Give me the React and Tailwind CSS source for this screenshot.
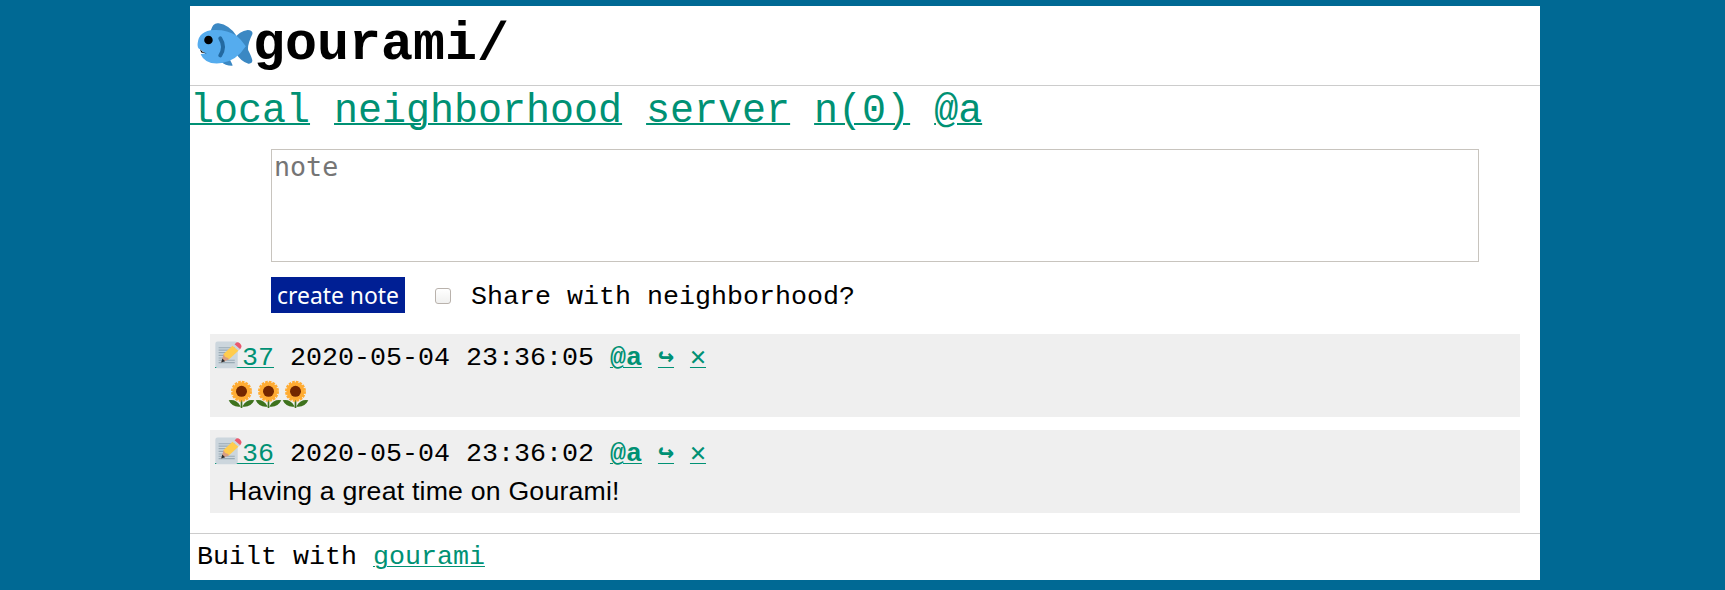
const Fish = () => (
  <svg className="mb-[3px] ml-px h-[48px] w-[56px] shrink-0" viewBox="50 60 171 144">
    <path fill="#3B88C3" d="M92 91Q99 66 116 69Q148 74 170 106L140 120ZM164 115Q179 93 205 89Q222 90 219 102Q204 132 206 150Q217 171 219 182Q219 193 207 192Q185 187 167 158ZM124 186Q137 199 159 198Q156 190 151 181Z" />
    <path fill="#55ACEE" d="M61 163L75 160L59 148Q50 145 52 130Q55 91 103 89Q143 88 170 106Q186 119 199 139Q171 183 126 190Q76 197 61 163Z" />
    <path fill="#000" d="M59 148Q66 158 80 161L63 158Z" />
    <circle cx="85" cy="120" r="13" fill="#000" />
    <path d="M121 115Q138 141 121 167" fill="none" stroke="#2369A0" strokeWidth="12" strokeLinecap="round" />
  </svg>
);

const Memo = () => (
  <svg className="h-[29px] w-[27px] shrink-0" viewBox="45 44 82 87">
    <rect x="46" y="48" width="68" height="81" rx="7" fill="#CCD6DD" />
    <path d="M56 67H105M56 74H105M56 82H100M56 90H93M56 98H86M56 105H105M56 112H105" stroke="#99AAB5" strokeWidth="3.5" />
    <path fill="#EA596E" d="M107 54Q113 47 121 54Q129 62 123 69L120 72L104 57Z" />
    <path fill="#CCD6DD" d="M99 61L104 56L121 71L116 76Z" />
    <path fill="#FFCC4D" d="M71 86L98 61L116 76L87 103L75 101Z" />
    <path fill="#D99E82" d="M71 86L76 95L85 98L87 103L64 112Z" />
    <path fill="#292F33" d="M67 100L76 108L64 112Z" />
  </svg>
);

const Sunflower = () => (
  <svg className="h-[29px] w-[27px] shrink-0" viewBox="84 163 81 87">
    <path fill="#3E721D" d="M122 220H127V247H122ZM121 241Q109 220 86 224Q97 246 121 243ZM128 241Q140 220 163 224Q152 246 128 243Z" />
    <circle cx="124.500" cy="197" r="27" fill="#FFAC33" />
    <circle cx="124.500" cy="197" r="28" fill="none" stroke="#FFAC33" strokeWidth="7" strokeDasharray="8 3" />
    <circle cx="124.500" cy="197" r="16.500" fill="#732700" />
  </svg>
);

const link = "text-[#009174] underline decoration-1 underline-offset-[2px]";
const NAV = ["local", "neighborhood", "server", "n(0)", "@a"];

function Note({ id, time, children }) {
  return (
    <article className="h-[83px] bg-[#efefef] px-[5px]">
      <div className="flex h-12 items-center gap-4 whitespace-pre leading-[48px]">
        <a className="mt-1.5 flex h-7 items-start self-start border-b border-[#009174] text-[#009174]">
          <Memo />
          <span className="leading-9">{id}</span>
        </a>
        <time>2020-05-04 {time}</time>
        <a className={`${link} font-bold`}>@a</a>
        <a className={`${link} w-4 font-bold`}>↪</a>
        <a className={`${link} w-4 font-bold`}>✕</a>
      </div>
      <div className="flex h-[26px] items-center pl-[13px] font-['Liberation_Sans',sans-serif] leading-[26px] tracking-[0.21px]">{children}</div>
    </article>
  );
}

export default function App() {
  return (
    <div className="h-[590px] bg-[#006994] pl-[190px] pr-[185px] pt-1.5 font-['Nimbus_Mono_PS','Courier_10_Pitch','Liberation_Mono',monospace] text-[26.667px] text-black">
      <main className="flex h-[574px] w-[1350px] flex-col bg-white">
        <header className="flex h-20 items-center border-b border-[#ccc] pl-1.5">
          <Fish />
          <h1 className="text-[53.333px] font-bold leading-[79px]">gourami/</h1>
        </header>
        <nav className="flex h-[50px] gap-6 pt-px text-[40px] leading-[50px]">
          {NAV.map((n) => (
            <a key={n} className="text-[#009174] underline decoration-2 underline-offset-[1px]">{n}</a>
          ))}
        </nav>
        <form className="ml-[81px] mt-[13px]">
          <textarea placeholder="note" className="block h-[113px] w-[1208px] resize-none border border-[#c8c4be] px-0.5 py-px font-['DejaVu_Sans_Mono',monospace] leading-[31px] placeholder:text-[#757575]" />
          <div className="mt-[15px] flex h-9 items-center">
            <button type="button" className="h-9 w-[134px] whitespace-nowrap bg-[#001f94] pt-px font-['Noto_Sans',sans-serif] text-[22.900px] leading-[35px] text-white">create note</button>
            <span className="ml-[30px] mt-0.5 h-4 w-4 rounded-[3px] border border-[#b9b2ac] bg-linear-to-b from-white to-[#f0f0ef]" />
            <label className="ml-[20px] pt-[3px] leading-9">Share with neighborhood?</label>
          </div>
        </form>
        <section className="mt-[21px] flex flex-col gap-[13px] px-5">
          <Note id="37" time="23:36:05"><span className="flex -translate-y-px tracking-normal"><Sunflower /><Sunflower /><Sunflower /></span></Note>
          <Note id="36" time="23:36:02">Having a great time on Gourami!</Note>
        </section>
        <footer className="mt-5 h-[47px] whitespace-pre border-t border-[#ccc] pl-[7px] leading-[46px]">
          Built with <a className={link}>gourami</a>
        </footer>
      </main>
    </div>
  );
}
